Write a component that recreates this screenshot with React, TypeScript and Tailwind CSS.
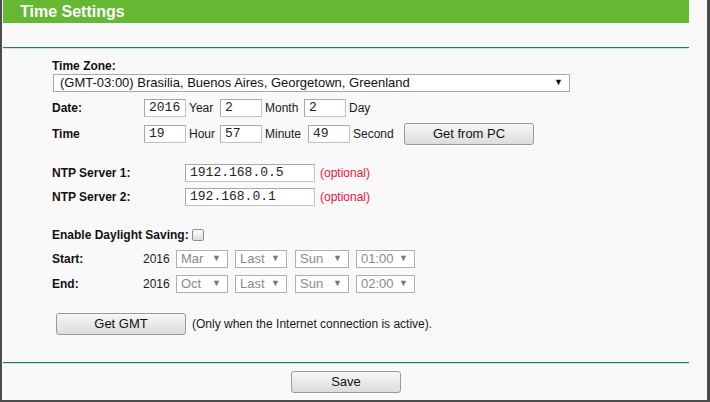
import React from "react";

const font = "font-['Liberation_Sans',Arial,sans-serif]";
const mono = "font-['Liberation_Mono','Courier_New',monospace]";

function TextInput({ value, w }: { value: string; w: string }) {
  return (
    <div
      className={`${w} h-[18px] shrink-0 bg-white border border-[#c3c3c3] border-t-[#a8a8a8] border-l-[#a8a8a8] flex items-center pl-[4px] text-[13px] text-[#222] ${mono}`}
    >
      {value}
    </div>
  );
}

function Btn({ label, w, h = "h-[22px]" }: { label: string; w: string; h?: string }) {
  return (
    <div
      className={`${w} ${h} shrink-0 rounded-[3px] border border-[#9a9a9a] bg-gradient-to-b from-[#f7f7f7] to-[#dcdcdc] flex items-center justify-center text-[13px] text-[#111]`}
    >
      {label}
    </div>
  );
}

function Sel({ label, w }: { label: string; w: string }) {
  return (
    <div
      className={`${w} h-[18px] shrink-0 bg-white border border-[#b0b0b0] flex items-center justify-between pl-[4px] pr-[6px] text-[13px] text-[#8a8a8a]`}
    >
      <span>{label}</span>
      <span className="text-[9px] text-[#777]">▼</span>
    </div>
  );
}

function Span({ children, w }: { children: React.ReactNode; w: string }) {
  return <div className={`${w} shrink-0 pl-[3px] text-[12px] text-[#1a1a1a]`}>{children}</div>;
}

export default function App() {
  return (
    <div
      className={`w-[710px] h-[402px] bg-[#f9f9f9] border-l-2 border-r-[3px] border-b-2 border-[#4b4b4b] flex flex-col ${font}`}
    >
      <div className="ml-px w-[686px] h-[23px] bg-[#65b832] text-white font-bold text-[16px] leading-[23px] pl-[17px]">
        Time Settings
      </div>
      <div className="mt-[24px] ml-px w-[686px] h-px bg-[#2a7a4d]" />
      <div className="ml-px w-[686px] h-px bg-[#d3e4d8]" />

      <div className="pl-[50px] flex flex-col">
        <div className="mt-[10px] h-[14px] leading-[14px] text-[12px] font-bold text-[#111]">Time Zone:</div>
        <div className="mt-px ml-px w-[517px] h-[18px] bg-white border border-[#a9a9a9] flex items-center justify-between pl-[6px] pr-[6px] text-[13px] text-[#111]">
          <span>(GMT-03:00) Brasilia, Buenos Aires, Georgetown, Greenland</span>
          <span className="text-[9px] text-[#111]">▼</span>
        </div>

        <div className="mt-[7px] h-[18px] flex items-center">
          <div className="w-[92px] shrink-0 text-[12px] font-bold text-[#111]">Date:</div>
          <TextInput value="2016" w="w-[42px]" />
          <Span w="w-[34px]">Year</Span>
          <TextInput value="2" w="w-[42px]" />
          <Span w="w-[42px]">Month</Span>
          <TextInput value="2" w="w-[42px]" />
          <Span w="w-[34px]">Day</Span>
        </div>

        <div className="mt-[6px] h-[22px] flex items-center">
          <div className="w-[92px] shrink-0 text-[12px] font-bold text-[#111]">Time</div>
          <TextInput value="19" w="w-[42px]" />
          <Span w="w-[34px]">Hour</Span>
          <TextInput value="57" w="w-[42px]" />
          <Span w="w-[46px]">Minute</Span>
          <TextInput value="49" w="w-[42px]" />
          <Span w="w-[54px]">Second</Span>
          <Btn label="Get from PC" w="w-[130px]" />
        </div>

        <div className="mt-[19px] h-[18px] flex items-center">
          <div className="w-[133px] shrink-0 text-[12px] font-bold text-[#111]">NTP Server 1:</div>
          <TextInput value="1912.168.0.5" w="w-[130px]" />
          <div className="pl-[5px] text-[12px] text-[#f0143c]">(optional)</div>
        </div>
        <div className="mt-[6px] h-[18px] flex items-center">
          <div className="w-[133px] shrink-0 text-[12px] font-bold text-[#111]">NTP Server 2:</div>
          <TextInput value="192.168.0.1" w="w-[130px]" />
          <div className="pl-[5px] text-[12px] text-[#f0143c]">(optional)</div>
        </div>

        <div className="mt-[22px] h-[13px] flex items-center">
          <div className="w-[140px] shrink-0 text-[12px] font-bold text-[#111]">Enable Daylight Saving:</div>
          <div className="w-[12px] h-[12px] rounded-[2px] border border-[#8f8f8f] bg-gradient-to-b from-[#fbfbfb] to-[#dedede]" />
        </div>

        <div className="mt-[9px] h-[18px] flex items-center">
          <div className="w-[91px] shrink-0 text-[12px] font-bold text-[#111]">Start:</div>
          <div className="w-[33px] shrink-0 text-[12px] text-[#1a1a1a]">2016</div>
          <Sel label="Mar" w="w-[52px]" />
          <div className="w-[7px]" />
          <Sel label="Last" w="w-[52px]" />
          <div className="w-[8px]" />
          <Sel label="Sun" w="w-[54px]" />
          <div className="w-[7px]" />
          <Sel label="01:00" w="w-[59px]" />
        </div>
        <div className="mt-[7px] h-[18px] flex items-center">
          <div className="w-[91px] shrink-0 text-[12px] font-bold text-[#111]">End:</div>
          <div className="w-[33px] shrink-0 text-[12px] text-[#1a1a1a]">2016</div>
          <Sel label="Oct" w="w-[52px]" />
          <div className="w-[7px]" />
          <Sel label="Last" w="w-[52px]" />
          <div className="w-[8px]" />
          <Sel label="Sun" w="w-[54px]" />
          <div className="w-[7px]" />
          <Sel label="02:00" w="w-[59px]" />
        </div>

        <div className="mt-[20px] h-[22px] flex items-center">
          <div className="w-[4px]" />
          <Btn label="Get GMT" w="w-[130px]" h="h-[22px]" />
          <div className="pl-[6px] text-[12px] text-[#1a1a1a]">(Only when the Internet connection is active).</div>
        </div>
      </div>

      <div className="mt-[27px] ml-px w-[686px] h-px bg-[#0b853d]" />
      <div className="ml-px w-[686px] h-px bg-[#d6e9dc]" />
      <div className="mt-[7px] ml-px w-[686px] flex justify-center">
        <Btn label="Save" w="w-[110px]" />
      </div>
    </div>
  );
}
